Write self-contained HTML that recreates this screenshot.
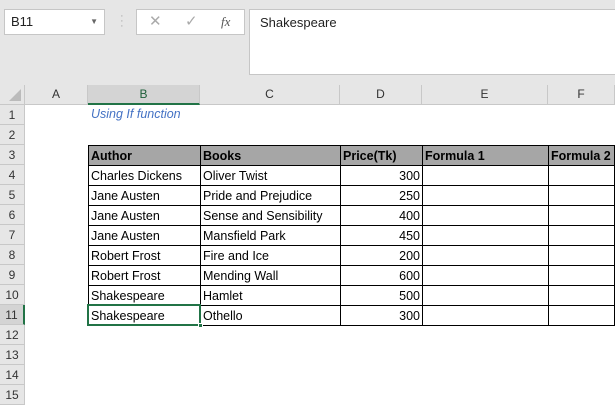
<!DOCTYPE html>
<html><head><meta charset="utf-8"><style>
*{margin:0;padding:0;box-sizing:border-box}
body{width:615px;height:400px;overflow:hidden;background:#fff;font-family:"Liberation Sans",sans-serif;position:relative}
.a{position:absolute}
#top{left:0;top:0;width:615px;height:85px;background:#e6e6e6}
.box{background:#fff;border:1px solid #c6c6c6}
.ch{top:85px;height:20px;background:#e6e6e6;border-right:1px solid #c8c8c8;border-bottom:1px solid #c8c8c8;font-size:12px;color:#333;text-align:center;line-height:19px}
.rh{left:0;width:25px;height:20px;background:#e6e6e6;border-bottom:1px solid #c8c8c8;border-right:1px solid #c8c8c8;font-size:12px;color:#333;text-align:center;line-height:20px}
table{position:absolute;left:88px;top:145px;border-collapse:collapse;font-size:12.5px}
td{border:1px solid #000;height:20px;padding:0 2px;white-space:nowrap;overflow:hidden}
tr.h td{background:#a6a6a6;font-weight:bold}
td.n{text-align:right}
</style></head><body>
<div id="top" class="a"></div>
<div class="a box" style="left:4px;top:9px;width:101px;height:26px;font-size:13px;line-height:24px;padding-left:6px;color:#222">B11<span style="position:absolute;right:6px;top:0;font-size:8px;color:#666">▼</span></div>
<div class="a" style="left:120px;top:14px;color:#aaa;font-size:11px;line-height:5px">·<br>·<br>·</div>
<div class="a box" style="left:136px;top:9px;width:109px;height:26px;color:#aaa;font-size:15px;line-height:24px">
<span class="a" style="left:12px">✕</span><span class="a" style="left:48px">✓</span><span class="a" style="left:84px;font-family:'Liberation Serif',serif;font-style:italic;color:#555;font-size:13px">fx</span></div>
<div class="a box" style="left:249px;top:9px;width:370px;height:66px;font-size:13px;padding:5px 10px;color:#222">Shakespeare</div>

<div class="a" style="left:0;top:85px;width:25px;height:20px;background:#e6e6e6;border-right:1px solid #c8c8c8;border-bottom:1px solid #c8c8c8"><div class="a" style="right:3px;bottom:3px;width:0;height:0;border-left:12px solid transparent;border-bottom:12px solid #bbb"></div></div>
<div class="a ch" style="left:25px;width:63px">A</div>
<div class="a ch" style="left:88px;width:112px;background:#d4d4d4;border-bottom:2px solid #217346;color:#1e5f3a">B</div>
<div class="a ch" style="left:200px;width:140px">C</div>
<div class="a ch" style="left:340px;width:82px">D</div>
<div class="a ch" style="left:422px;width:126px">E</div>
<div class="a ch" style="left:548px;width:67px">F</div>

<div class="a rh" style="top:105px">1</div>
<div class="a rh" style="top:125px">2</div>
<div class="a rh" style="top:145px">3</div>
<div class="a rh" style="top:165px">4</div>
<div class="a rh" style="top:185px">5</div>
<div class="a rh" style="top:205px">6</div>
<div class="a rh" style="top:225px">7</div>
<div class="a rh" style="top:245px">8</div>
<div class="a rh" style="top:265px">9</div>
<div class="a rh" style="top:285px">10</div>
<div class="a rh" style="top:305px;background:#d4d4d4;border-right:2px solid #217346">11</div>
<div class="a rh" style="top:325px">12</div>
<div class="a rh" style="top:345px">13</div>
<div class="a rh" style="top:365px">14</div>
<div class="a rh" style="top:385px">15</div>

<div class="a" style="left:91px;top:107px;font-size:12.5px;font-style:italic;color:#4472c4">Using If function</div>

<table>
<colgroup><col style="width:112px"><col style="width:140px"><col style="width:82px"><col style="width:126px"><col style="width:66px"></colgroup>
<tr class="h"><td>Author</td><td>Books</td><td>Price(Tk)</td><td>Formula 1</td><td>Formula 2</td></tr>
<tr><td>Charles Dickens</td><td>Oliver Twist</td><td class="n">300</td><td></td><td></td></tr>
<tr><td>Jane Austen</td><td>Pride and Prejudice</td><td class="n">250</td><td></td><td></td></tr>
<tr><td>Jane Austen</td><td>Sense and Sensibility</td><td class="n">400</td><td></td><td></td></tr>
<tr><td>Jane Austen</td><td>Mansfield Park</td><td class="n">450</td><td></td><td></td></tr>
<tr><td>Robert Frost</td><td>Fire and Ice</td><td class="n">200</td><td></td><td></td></tr>
<tr><td>Robert Frost</td><td>Mending Wall</td><td class="n">600</td><td></td><td></td></tr>
<tr><td>Shakespeare</td><td>Hamlet</td><td class="n">500</td><td></td><td></td></tr>
<tr><td>Shakespeare</td><td>Othello</td><td class="n">300</td><td></td><td></td></tr>
</table>
<div class="a" style="left:87px;top:304px;width:114px;height:22px;border:2px solid #217346"></div>
<div class="a" style="left:198px;top:323px;width:5px;height:5px;background:#217346;border:1px solid #fff"></div>
</body></html>
